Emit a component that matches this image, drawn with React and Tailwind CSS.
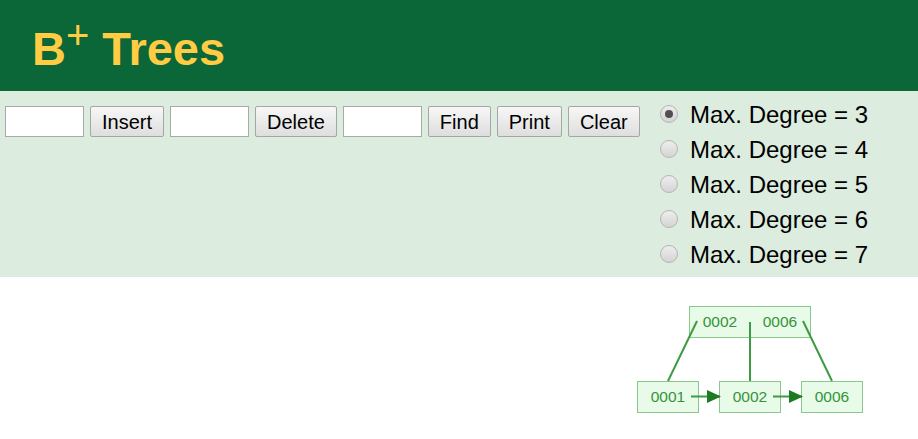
import React from "react";

const DEGREES = [3, 4, 5, 6, 7];

function Field() {
  return <input type="text" className="w-[79px] h-[31px] bg-white border border-[#a9a9a9] px-1 text-[18px] outline-none" />;
}

function Btn({ children }) {
  return (
    <button className="h-[31px] px-[11px] border border-[#a6a6a6] rounded-[2px] bg-gradient-to-b from-[#f7f7f7] to-[#dedede] text-[20px] leading-none text-black">
      {children}
    </button>
  );
}

function Radio({ checked }) {
  return (
    <span className="w-[18px] h-[18px] -mt-[6px] rounded-full border border-[#b5b5b5] bg-gradient-to-b from-[#eeeeee] to-[#d4d4d4] flex items-center justify-center shrink-0">
      {checked && <span className="w-[8px] h-[8px] rounded-full bg-[#505050]" />}
    </span>
  );
}

function TreeDrawing() {
  const node = { fill: "#e8fae8", stroke: "#88c888", strokeWidth: 1 };
  const text = { fill: "#35943a", fontSize: 15.5, fontFamily: "Liberation Sans, sans-serif", textAnchor: "middle" };
  return (
    <svg width="918" height="162" className="block">
      <defs>
        <marker id="arrow" markerWidth="14" markerHeight="14" refX="13" refY="6.5" orient="auto" markerUnits="userSpaceOnUse">
          <path d="M0,0 L14,6.5 L0,13 z" fill="#1b7a22" />
        </marker>
      </defs>
      <rect x="689.5" y="29.5" width="121" height="31" {...node} />
      <text x="720" y="50" {...text}>0002</text>
      <text x="780" y="50" {...text}>0006</text>
      {[637, 719, 801].map((x) => (
        <rect key={x} x={x + 0.5} y="104.5" width="61" height="31" {...node} />
      ))}
      <text x="668" y="125" {...text}>0001</text>
      <text x="750" y="125" {...text}>0002</text>
      <text x="832" y="125" {...text}>0006</text>
      <g stroke="#3f9a44" strokeWidth="2">
        <line x1="697" y1="44" x2="668" y2="104" />
        <line x1="750" y1="45" x2="750" y2="104" />
        <line x1="803" y1="44" x2="832" y2="104" />
        <line x1="691" y1="119.5" x2="720" y2="119.5" markerEnd="url(#arrow)" />
        <line x1="773" y1="119.5" x2="802" y2="119.5" markerEnd="url(#arrow)" />
      </g>
    </svg>
  );
}

export default function App() {
  return (
    <div className="w-[918px] h-[439px] bg-white font-['Liberation_Sans',Arial,sans-serif] overflow-hidden">
      <header className="h-[91px] bg-[#0b6638] pl-[32px] pt-[25px]">
        <h1 className="flex items-start text-[47px] font-bold text-[#ffcc44] leading-none">
          <span>B</span>
          <span className="text-[40px] font-normal -mt-[10px]">+</span>
          <span className="ml-[13px]">Trees</span>
        </h1>
      </header>

      <div className="h-[186px] bg-[#dcecdf] flex">
        <div className="flex items-start gap-[6px] pl-[5px] pt-[15px] w-[655px]">
          <Field />
          <Btn>Insert</Btn>
          <Field />
          <Btn>Delete</Btn>
          <Field />
          <Btn>Find</Btn>
          <Btn>Print</Btn>
          <Btn>Clear</Btn>
        </div>
        <div className="flex flex-col pt-[8px] pl-[5px]">
          {DEGREES.map((d) => (
            <label key={d} className="h-[35px] flex items-center gap-[12px] text-[24px] text-black">
              <Radio checked={d === 3} />
              <span className="-mt-[4px]">Max. Degree = {d}</span>
            </label>
          ))}
        </div>
      </div>

      <TreeDrawing />
    </div>
  );
}
